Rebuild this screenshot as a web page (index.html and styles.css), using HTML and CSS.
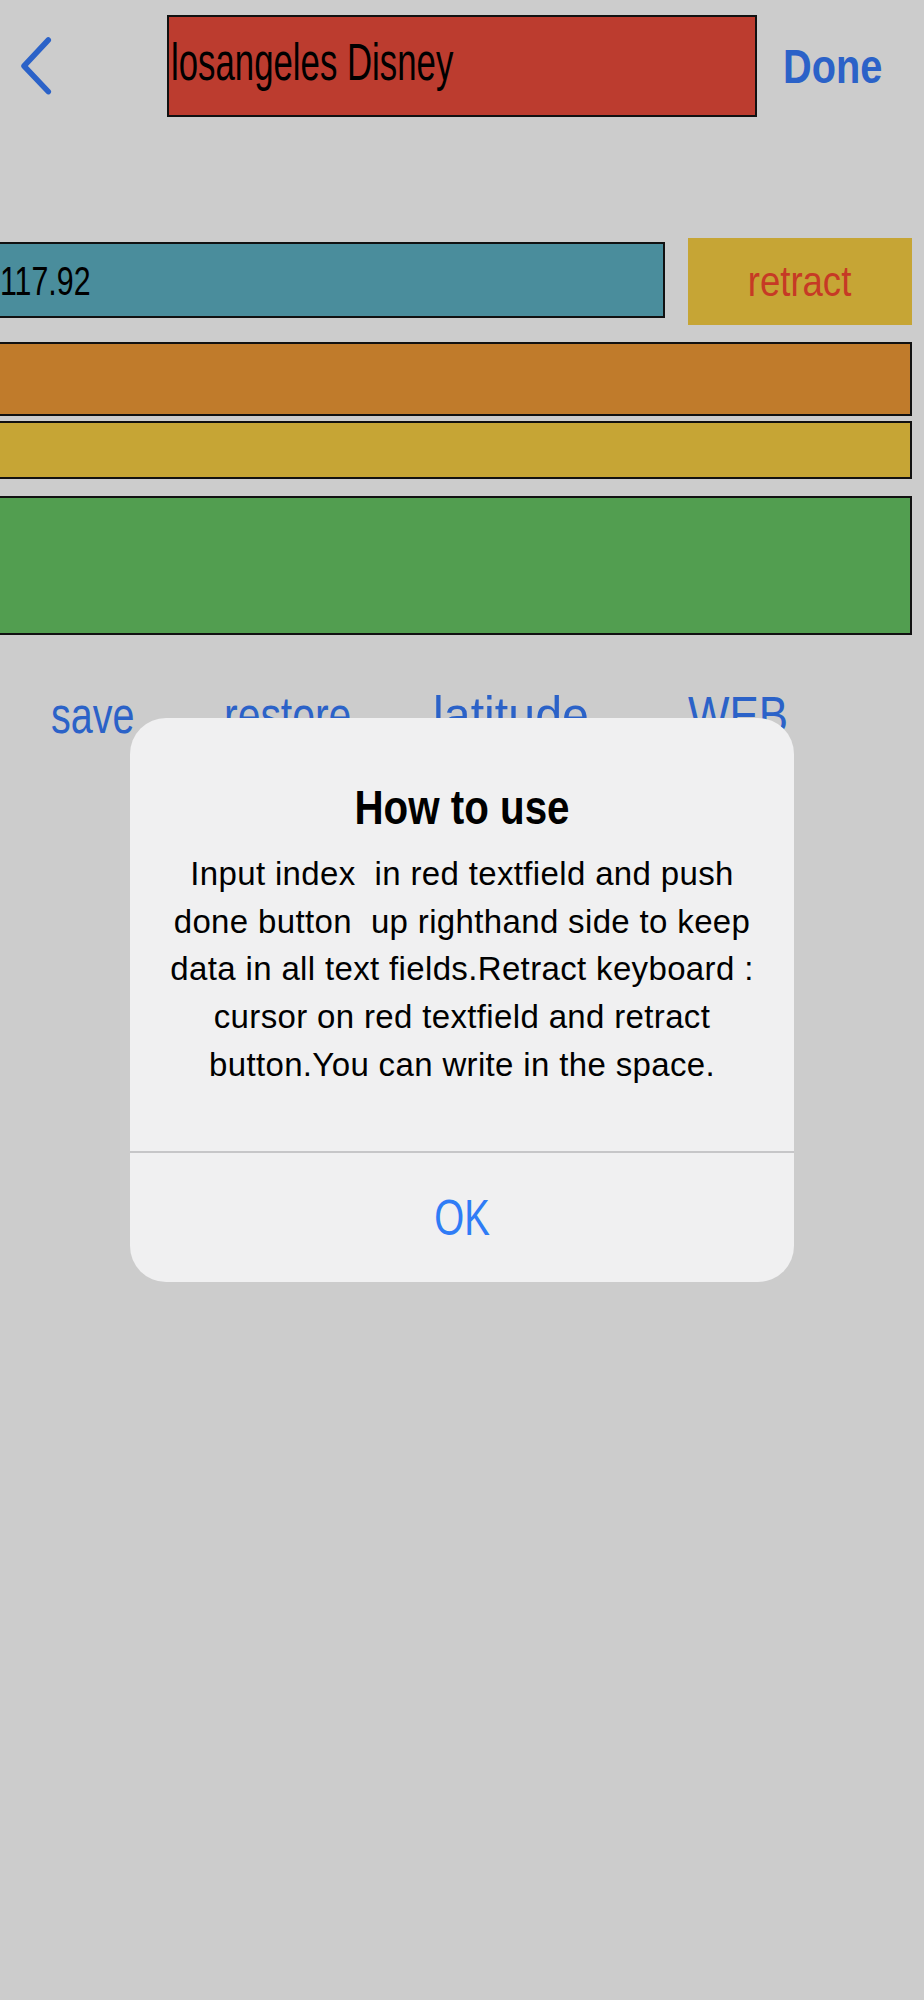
FILE: index.html
```html
<!DOCTYPE html>
<html lang="en">
<head>
<meta charset="utf-8">
<title>How to use</title>
<link rel="stylesheet" href="styles.css">
</head>
<body>
<div class="screen">
  <header class="nav">
    <svg class="back" width="32" height="60" viewBox="0 0 32 60" aria-hidden="true">
      <path d="M28.3 4 L4 30 L28.3 55.7" fill="none" stroke="#2b62c8" stroke-width="5.5" stroke-linecap="round" stroke-linejoin="round"/>
    </svg>
    <div class="field field-red"><span class="txt txt-red">losangeles Disney</span></div>
    <div class="done"><span class="txt txt-done">Done</span></div>
  </header>

  <div class="row">
    <div class="field field-teal"><span class="txt txt-teal">117.92</span></div>
    <div class="retract"><span class="txt txt-retract">retract</span></div>
  </div>

  <div class="field field-wide field-orange"></div>
  <div class="field field-wide field-yellow"></div>
  <div class="field field-wide field-green"></div>

  <div class="buttons">
    <div class="btn btn-save"><span class="txt">save</span></div>
    <div class="btn btn-restore"><span class="txt">restore</span></div>
    <div class="btn btn-lat"><span class="txt">latitude</span></div>
    <div class="btn btn-web"><span class="txt">WEB</span></div>
  </div>

  <div class="alert" role="alertdialog">
    <div class="alert-content">
      <div class="alert-title"><span class="txt">How to use</span></div>
      <div class="alert-msg">Input index &nbsp;in red textfield and push<br>done button &nbsp;up righthand side to keep<br>data in all text fields.Retract keyboard :<br>cursor on red textfield and retract<br>button.You can write in the space.</div>
    </div>
    <div class="alert-sep"></div>
    <div class="alert-action"><span class="txt">OK</span></div>
  </div>
</div>
</body>
</html>
```

FILE: styles.css
```css
* { box-sizing: border-box; }

html, body {
  margin: 0;
  padding: 0;
  background: #cccccc;
}

body {
  font-family: "Liberation Sans", Arial, sans-serif;
  width: 924px;
  height: 2000px;
  overflow: hidden;
}

.screen {
  position: relative;
  width: 924px;
  height: 2000px;
  background: #cccccc;
}

.txt {
  display: inline-block;
  white-space: nowrap;
  transform-origin: left center;
}

/* nav bar */
.nav {
  display: flex;
  align-items: flex-start;
  height: 117px;
}

.back {
  display: block;
  margin-left: 20px;
  margin-top: 36px;
  flex: none;
}

.field {
  border: 2px solid #111;
  flex: none;
}

.field-red {
  margin-left: 115px;
  margin-top: 15px;
  width: 590px;
  height: 102px;
  background: #bc3c2f;
  padding: 20px 0 0 2px;
}

.txt-red {
  font-size: 51px;
  line-height: 51px;
  color: #000;
  transform: scaleX(0.682);
}

.done {
  margin-left: 26px;
  margin-top: 42px;
  flex: none;
}

.txt-done {
  font-size: 49px;
  line-height: 49px;
  font-weight: 700;
  color: #2b62c8;
  transform: scaleX(0.81);
}

/* first data row */
.row {
  display: flex;
  align-items: flex-start;
  margin-top: 121px;
  height: 87px;
}

.field-teal {
  margin-top: 4px;
  width: 665px;
  height: 76px;
  border-left: 0;
  background: #4a8d9c;
  padding-top: 17px;
}

.txt-teal {
  font-size: 41px;
  line-height: 41px;
  color: #000;
  transform: scaleX(0.74);
}

.retract {
  margin-left: 23px;
  width: 224px;
  height: 87px;
  background: #c6a535;
  display: flex;
  justify-content: center;
  align-items: center;
}

.txt-retract {
  font-size: 42px;
  line-height: 42px;
  color: #c63a25;
  transform-origin: center;
  transform: scaleX(0.87);
}

/* wide fields */
.field-wide {
  width: 912px;
  border-left: 0;
}

.field-orange {
  margin-top: 17px;
  height: 74px;
  background: #c07b2b;
}

.field-yellow {
  margin-top: 5px;
  height: 58px;
  background: #c6a535;
}

.field-green {
  margin-top: 17px;
  height: 139px;
  background: #529e50;
}

/* buttons */
.buttons {
  display: flex;
  margin-top: 54px;
}

.btn {
  flex: none;
  font-size: 52px;
  line-height: 52px;
  color: #2b62c8;
}

.btn-save { margin-left: 51px; width: 84px; }
.btn-save .txt { transform: scaleX(0.76); }
.btn-restore { margin-left: 89px; width: 128px; }
.btn-restore .txt { transform: scaleX(0.787); }
.btn-lat { margin-left: 81px; width: 156px; }
.btn-lat .txt { transform: scaleX(0.93); }
.btn-web { margin-left: 99px; width: 100px; }
.btn-web .txt { transform: scaleX(0.844); }

/* alert */
.alert {
  position: absolute;
  top: 718px;
  left: 130px;
  width: 664px;
  height: 564px;
  background: #f0f0f1;
  border-radius: 36px;
  display: flex;
  flex-direction: column;
  overflow: hidden;
}

.alert-content {
  padding: 66px 20px 0;
  height: 433px;
  text-align: center;
  color: #000;
}

.alert-title {
  font-size: 48px;
  line-height: 48px;
  font-weight: 700;
}

.alert-title .txt {
  transform-origin: center;
  transform: scaleX(0.84);
}

.alert-msg {
  margin-top: 18px;
  font-size: 33px;
  line-height: 47.7px;
  letter-spacing: 0.35px;
}

.alert-sep {
  height: 2px;
  background: #c6c6c8;
  flex: none;
}

.alert-action {
  flex: 1;
  display: flex;
  justify-content: center;
  align-items: center;
  font-size: 50px;
  line-height: 50px;
  color: #2f7cf6;
}

.alert-action .txt {
  transform-origin: center;
  transform: scaleX(0.77);
}
```
